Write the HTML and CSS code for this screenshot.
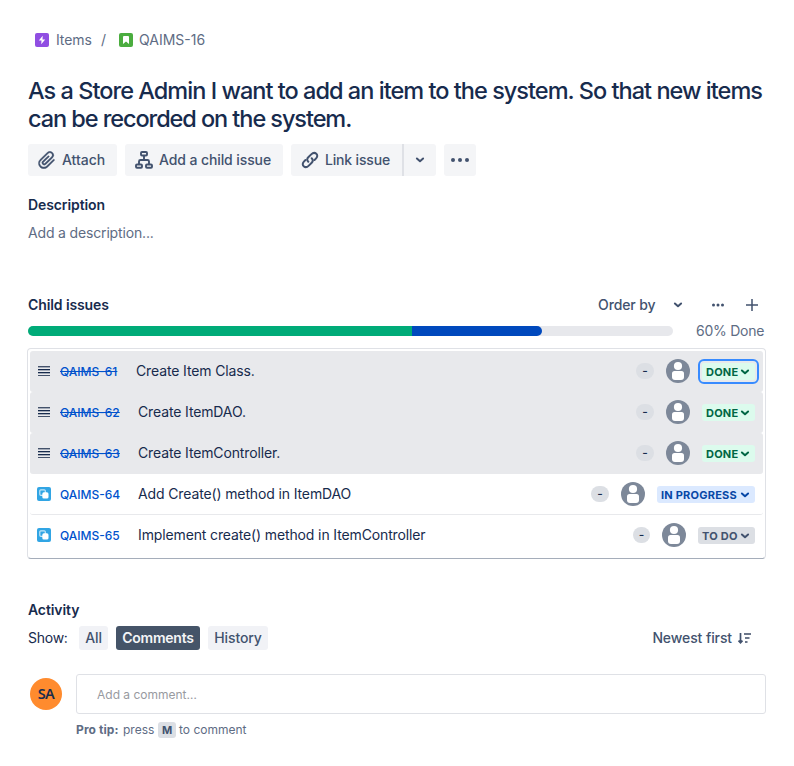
FILE: index.html
```html
<!DOCTYPE html>
<html lang="en">
<head>
<meta charset="utf-8">
<title>QAIMS-16</title>
<link rel="stylesheet" href="styles.css">
</head>
<body>
<svg class="defs" width="0" height="0" aria-hidden="true">
  <symbol id="chevron" viewBox="0 0 10 8"><path d="M1.900 2.500 5 5.300 8.100 2.500" fill="none" stroke="currentColor" stroke-width="2" stroke-linecap="round" stroke-linejoin="round"/></symbol>
  <symbol id="person" viewBox="0 0 24 24"><circle cx="12" cy="12" r="12" fill="#7d8899"/><circle cx="12" cy="7" r="4.1" fill="#fff"/><path d="M6 14.5Q6 12 8.500 12H15.500Q18 12 18 14.500V18Q18 21 15 21H9Q6 21 6 18Z" fill="#fff"/></symbol>
  <symbol id="subtask" viewBox="0 0 14 14"><rect width="14" height="14" rx="2" fill="#31a5e4"/><rect x="2.800" y="2.800" width="5.500" height="5.500" rx="1" fill="none" stroke="#c5e7f8" stroke-width="1.200"/><rect x="5.300" y="5.300" width="6.200" height="6.200" rx="1.600" fill="#fff"/></symbol>
  <symbol id="lines" viewBox="0 0 12 10"><path d="M0 1.500H12M0 4.500H12M0 7.500H12" stroke="#a4abb8"/><path d="M0 .5H12M0 9.500H12" stroke="#44526b"/><path d="M0 3.500H12M0 6.500H12" stroke="#172b4d"/></symbol>
</svg>
<main class="issue">
  <nav class="crumbs">
    <svg width="14" height="14" viewBox="0 0 14 14"><rect width="14" height="14" rx="2" fill="#904ee2"/><path d="M7.700 2.700 3.800 7.500H6.500L6.200 11.300 10.200 6.500H7.500Z" fill="#fff"/></svg>
    <span class="crumb-parent">Items</span><span class="slash">/</span>
    <svg width="14" height="14" viewBox="0 0 14 14"><rect width="14" height="14" rx="2" fill="#4bad3f"/><path d="M4 4Q4 3 5 3H9Q10 3 10 4V11L7 8.500 4 11Z" fill="#fff"/></svg>
    <span class="crumb-key">QAIMS-16</span>
  </nav>
  <h1><span class="t1">As a Store Admin I want to add an item to the system. So that new items</span><br><span class="t2">can be recorded on the system.</span></h1>
  <div class="toolbar">
    <button class="btn attach"><svg width="18" height="18" viewBox="3 3 18 18" fill="currentColor" stroke="currentColor" stroke-width=".3"><path d="M11.643 17.965c-1.530 1.495-4.016 1.496-5.542.004a3.773 3.773 0 0 1 .002-5.412l7.147-6.985a2.316 2.316 0 0 1 3.220.004c.893.872.895 2.291.004 3.162l-6.700 6.548a.76.76 0 0 1-1.063-.001.718.718 0 0 1-.001-1.023l5.320-5.199a.8.8 0 0 0-1.120-1.144l-5.320 5.199a2.318 2.318 0 0 0 0 3.312 2.360 2.360 0 0 0 3.298.002l6.700-6.548a3.858 3.858 0 0 0-.002-5.420 3.916 3.916 0 0 0-5.460-.004l-7.146 6.985a5.373 5.373 0 0 0-.002 7.700 5.460 5.460 0 0 0 7.660-.001l6.713-6.561a.8.8 0 0 0-1.118-1.144l-6.714 6.561z"/></svg><span>Attach</span></button>
    <button class="btn child"><svg width="18" height="18" viewBox="0 0 18 18" fill="none" stroke="currentColor" stroke-width="1.900"><rect x="6" y="1" width="6" height="3.500" rx="1"/><rect x="1" y="13.500" width="6" height="3.200" rx="1"/><rect x="11" y="13.500" width="6" height="3.200" rx="1"/><path d="M9 4.500V9M4 13.500V10.500Q4 9 5.500 9H12.500Q14 9 14 10.500V13.500"/></svg><span>Add a child issue</span></button>
    <div class="split">
      <button class="btn link"><svg width="18" height="18" viewBox="0 0 18 18" fill="none" stroke="currentColor" stroke-width="2" stroke-linecap="round"><path d="M7.300 10.700C5.600 9 6.100 7.500 7.300 6.300L10.200 3.400C11.900 1.700 13.900 1.500 15.300 2.800S16.500 6 14.900 7.600L13.500 9"/><path d="M10.700 7.300C12.400 9 11.900 10.500 10.700 11.700L7.800 14.600C6.100 16.300 4.100 16.500 2.700 15.200S1.500 12 3.100 10.400L4.500 9"/></svg><span>Link issue</span></button>
      <button class="btn drop"><svg width="10" height="8"><use href="#chevron"/></svg></button>
    </div>
    <button class="btn more"><svg width="18" height="4" viewBox="0 0 18 4" fill="currentColor"><circle cx="2" cy="2" r="2"/><circle cx="9" cy="2" r="2"/><circle cx="16" cy="2" r="2"/></svg></button>
  </div>
  <h2 class="desc-title"><span>Description</span></h2>
  <p class="desc"><span>Add a description...</span></p>

  <header class="child-head">
    <h2><span class="child-title">Child issues</span></h2>
    <span class="order">Order by</span>
    <svg class="order-arrow" width="10" height="8"><use href="#chevron"/></svg>
    <svg class="dots" width="14" height="4" viewBox="0 0 14 4" fill="currentColor"><circle cx="2.500" cy="2" r="1.500"/><circle cx="7" cy="2" r="1.500"/><circle cx="11.500" cy="2" r="1.500"/></svg>
    <svg width="12" height="12" viewBox="0 0 12 12" stroke="currentColor" stroke-width="1.500"><path d="M6 0V12M0 6H12"/></svg>
  </header>
  <div class="progress"><div class="track"><div class="done-part"></div><div class="doing-part"></div></div><span class="percent">60% Done</span></div>

  <section class="list">
    <div class="row closed focus-row"><svg class="kind" width="12" height="10"><use href="#lines"/></svg><a class="key k61">QAIMS-61</a><span class="name n1">Create Item Class.</span><span class="est">-</span><svg class="person" width="24" height="24"><use href="#person"/></svg><span class="status done focused"><b>DONE</b><svg width="10" height="8"><use href="#chevron"/></svg></span></div>
    <div class="row closed"><svg class="kind" width="12" height="10"><use href="#lines"/></svg><a class="key">QAIMS-62</a><span class="name n2">Create ItemDAO.</span><span class="est">-</span><svg class="person" width="24" height="24"><use href="#person"/></svg><span class="status done"><b>DONE</b><svg width="10" height="8"><use href="#chevron"/></svg></span></div>
    <div class="row closed"><svg class="kind" width="12" height="10"><use href="#lines"/></svg><a class="key">QAIMS-63</a><span class="name n3">Create ItemController.</span><span class="est">-</span><svg class="person" width="24" height="24"><use href="#person"/></svg><span class="status done"><b>DONE</b><svg width="10" height="8"><use href="#chevron"/></svg></span></div>
    <div class="row open"><svg class="kind" width="14" height="14"><use href="#subtask"/></svg><a class="key">QAIMS-64</a><span class="name n4">Add Create() method in ItemDAO</span><span class="est">-</span><svg class="person" width="24" height="24"><use href="#person"/></svg><span class="status doing"><b>IN PROGRESS</b><svg width="10" height="8"><use href="#chevron"/></svg></span></div>
    <div class="row open last"><svg class="kind" width="14" height="14"><use href="#subtask"/></svg><a class="key">QAIMS-65</a><span class="name n5">Implement create() method in ItemController</span><span class="est narrow">-</span><svg class="person" width="24" height="24"><use href="#person"/></svg><span class="status todo"><b>TO DO</b><svg width="10" height="8"><use href="#chevron"/></svg></span></div>
  </section>

  <h2 class="activity"><span>Activity</span></h2>
  <div class="filters"><span class="show">Show:</span><button class="tab all">All</button><button class="tab comments active">Comments</button><button class="tab history">History</button>
    <span class="sort"><span>Newest first</span><svg width="14" height="12" viewBox="0 0 14 12" fill="none" stroke="currentColor"><path d="M3.500 1V10.500M1.500 8.700 3.500 10.700 5.500 8.700" stroke-width="1.700"/><path d="M7 2H14M8 6H12.500M8 10H10.500" stroke-width="1.800" stroke="#6c778b"/></svg></span>
  </div>
  <div class="compose"><div class="avatar">SA</div><div class="entry"><div class="box"><span>Add a comment…</span></div><p class="tip"><b>Pro tip:</b><span class="press">press</span><kbd>M</kbd><span class="tc">to comment</span></p></div></div>
</main>
</body>
</html>
```

FILE: styles.css
```css
* { box-sizing: border-box; }
body { margin: 0; background: #fff; color: #172b4d; font-family: Inter, "Liberation Sans", sans-serif; font-size: 14px; line-height: 20px; letter-spacing: -0.1px; }
button { border: 0; margin: 0; padding: 0; font: inherit; letter-spacing: inherit; color: inherit; }
h1, h2, p { margin: 0; }
svg { display: block; flex: none; }
.defs { position: absolute; }
.issue { padding: 30px 28px 0; white-space: nowrap; }

.crumbs { display: flex; align-items: center; height: 20px; padding-left: 7px; color: #5e6c84; }
.crumb-parent { margin-left: 7px; width: 45px; }
.slash { width: 18px; }
.crumb-key { margin-left: 6px; letter-spacing: 0; }
h1 { margin-top: 27px; font-size: 23.5px; line-height: 28px; font-weight: 500; letter-spacing: -0.97px; }
.t2 { letter-spacing: -1.07px; }

.toolbar { display: flex; gap: 8px; margin-top: 11px; color: #42526e; font-weight: 500; }
.btn { display: flex; align-items: center; height: 32px; padding-left: 10px; gap: 6px; border-radius: 3px; background: #f4f5f7; }
.attach { width: 89px; letter-spacing: 0; }
.child { width: 158px; }
.split { display: flex; }
.link { width: 111px; border-radius: 3px 0 0 3px; letter-spacing: -0.17px; }
.drop { width: 34px; padding: 0 0 0 11px; border-left: 2px solid #dfe1e6; border-radius: 0 3px 3px 0; }
.more { width: 32px; padding-left: 7px; }

h2 { font-size: 14px; line-height: 20px; font-weight: 600; }
.desc-title { margin-top: 19px; }
.desc { margin-top: 8px; color: #5e6c84; letter-spacing: -0.16px; }

.child-head { display: flex; align-items: center; height: 20px; margin-top: 52px; padding-right: 8px; color: #42526e; }
.child-head h2 { flex: 1; color: #172b4d; }
.order { font-weight: 500; width: 75px; }
.dots { margin: 0 21px 0 28px; }
.progress { display: flex; align-items: center; height: 20px; margin-top: 6px; color: #5e6c84; letter-spacing: -0.25px; }
.track { display: flex; width: 645px; height: 10px; margin-right: 23px; border-radius: 5px; background: #e7e8ec; overflow: hidden; }
.done-part { width: 384px; background: #00ab78; }
.doing-part { width: 130px; background: #0049bd; border-radius: 0 5px 5px 0; }

.list { height: 211px; margin: 7px 0 0 -1px; width: 739px; padding: 2px 2px 0; border: 1px solid #dfe1e6; border-bottom-color: #a5adba; border-radius: 4px; }
.row { display: flex; align-items: center; height: 41px; padding: 0 8px 0 7px; border-bottom: 1px solid #e8e9ec; border-radius: 3px; }
.closed { background: #e8e9ec; padding-left: 8px; }
.last { border-bottom-color: transparent; }
.kind { margin-right: 9px; }
.closed .kind { margin-right: 10px; }
.key { width: 78px; font-size: 12px; font-weight: 500; color: #0052cc; padding-top: 1px; letter-spacing: 0; }
.k61 { width: 76px; }
.closed .key { text-decoration: line-through; }
.name { flex: 1; letter-spacing: -0.13px; }
.n1 { letter-spacing: -0.13px; }
.est { width: 18px; height: 16px; border-radius: 8px; background: #dcdfe4; font-size: 12px; line-height: 15px; text-align: center; font-weight: 500; }
.narrow { width: 17px; }
.person { margin: 0 12px; }
.status { display: flex; align-items: center; justify-content: space-between; height: 17px; margin-top: 1px; padding: 1px 5px 0 4px; border-radius: 3px; font-size: 11px; }
.status b { font-weight: 700; letter-spacing: 0.22px; }
.done { width: 53px; color: #006644; background: #dcfbed; }
.focus-row { padding-right: 4px; }
.focus-row .person { margin-right: 8px; }
.focused { width: 61px; height: 25px; padding: 1px 7px 0 6px; border: 2px solid #388bff; border-radius: 6px; box-shadow: inset 0 0 0 2px #e8e9ec; }
.doing { width: 98px; color: #0747a6; background: #dbe9ff; }
.todo { width: 57px; color: #42526e; background: #dcdfe4; }

.activity { margin-top: 41px; }
.filters { display: flex; align-items: center; height: 24px; margin-top: 6px; }
.show { width: 51px; letter-spacing: -0.25px; }
.tab { height: 24px; border-radius: 3px; background: #f1f2f6; color: #42526e; font-weight: 500; text-align: center; }
.all { width: 29px; }
.comments { width: 84px; margin: 0 8px; }
.active { background: #455468; color: #f4f5f7; font-weight: 600; letter-spacing: -0.25px; }
.history { width: 60px; }
.sort { display: flex; align-items: center; gap: 5px; margin-left: auto; margin-right: 15px; color: #42526e; font-weight: 500; letter-spacing: -0.1px; }
.compose { display: flex; margin-top: 24px; padding-left: 2px; }
.avatar { width: 32px; height: 32px; margin: 4px 14px 0 0; border-radius: 50%; background: #ff8b2e; font: 600 14.5px/31px "Noto Sans", sans-serif; letter-spacing: -0.7px; text-align: center; }
.entry { flex: 1; }
.box { display: flex; align-items: center; height: 40px; padding: 1px 0 0 20px; border: 1px solid #dfe1e6; border-radius: 3px; color: #989a9f; font-size: 12px; letter-spacing: 0; }
.tip { display: flex; align-items: center; height: 20px; margin-top: 6px; font-size: 12px; color: #5e6c84; letter-spacing: 0; }
.tip b { width: 47px; font-weight: 700; letter-spacing: 0.1px; }
.press { width: 35px; }
kbd { width: 18px; height: 16px; margin-right: 3px; border-radius: 3px; background: #dcdfe4; color: #42526e; font: 700 11px/16px Inter, sans-serif; text-align: center; }
```
